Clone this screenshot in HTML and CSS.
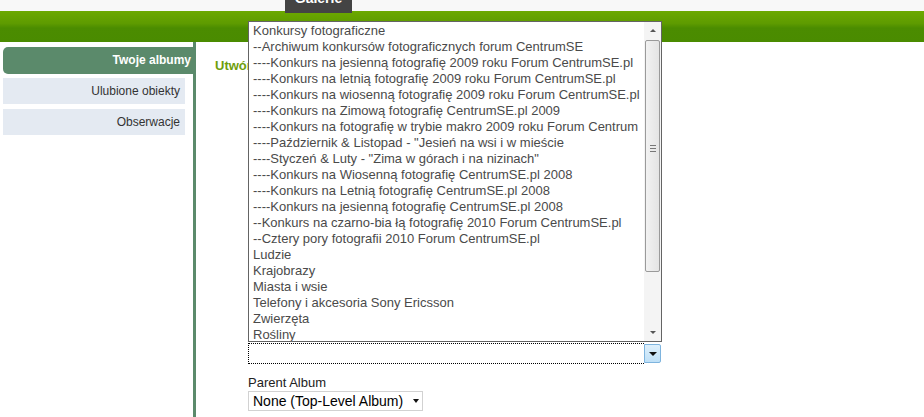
FILE: index.html
```html
<!DOCTYPE html>
<html lang="pl">
<head>
<meta charset="utf-8">
<title>Galerie</title>
<link rel="stylesheet" href="styles.css">
</head>
<body>
<div class="topstrip">
  <div class="tab"><span>Galerie</span></div>
</div>
<div class="greenbar"></div>
<div class="page">
  <div class="sidebar">
    <div class="side-active">Twoje albumy</div>
    <div class="side-item">Ulubione obiekty</div>
    <div class="side-item">Obserwacje</div>
  </div>
  <div class="main">
    <h2 class="heading">Utwórz nowy album</h2>
    <div class="form">
      <div class="combo">
        <div class="droplist">
          <div class="options">
            <div class="opt">Konkursy fotograficzne</div>
            <div class="opt">--Archiwum konkursów fotograficznych forum CentrumSE</div>
            <div class="opt">----Konkurs na jesienną fotografię 2009 roku Forum CentrumSE.pl</div>
            <div class="opt">----Konkurs na letnią fotografię 2009 roku Forum CentrumSE.pl</div>
            <div class="opt">----Konkurs na wiosenną fotografię 2009 roku Forum CentrumSE.pl</div>
            <div class="opt">----Konkurs na Zimową fotografię CentrumSE.pl 2009</div>
            <div class="opt">----Konkurs na fotografię w trybie makro 2009 roku Forum Centrum</div>
            <div class="opt">----Październik &amp; Listopad - "Jesień na wsi i w mieście</div>
            <div class="opt">----Styczeń &amp; Luty - "Zima w górach i na nizinach"</div>
            <div class="opt">----Konkurs na Wiosenną fotografię CentrumSE.pl 2008</div>
            <div class="opt">----Konkurs na Letnią fotografię CentrumSE.pl 2008</div>
            <div class="opt">----Konkurs na jesienną fotografię CentrumSE.pl 2008</div>
            <div class="opt">--Konkurs na czarno-bia łą fotografię 2010 Forum CentrumSE.pl</div>
            <div class="opt">--Cztery pory fotografii 2010 Forum CentrumSE.pl</div>
            <div class="opt">Ludzie</div>
            <div class="opt">Krajobrazy</div>
            <div class="opt">Miasta i wsie</div>
            <div class="opt">Telefony i akcesoria Sony Ericsson</div>
            <div class="opt">Zwierzęta</div>
            <div class="opt">Rośliny</div>
          </div>
          <div class="scrollbar">
            <div class="sb-btn"><span class="tri-up"></span></div>
            <div class="sb-track">
              <div class="sb-thumb"><span class="grip"></span></div>
            </div>
            <div class="sb-btn"><span class="tri-down"></span></div>
          </div>
        </div>
        <div class="combo-field"></div>
        <div class="combo-btn"><span class="tri-down dark"></span></div>
      </div>
      <div class="label">Parent Album</div>
      <div class="select2">None (Top-Level Album) <span class="tri-down dark small"></span></div>
    </div>
  </div>
</div>
</body>
</html>
```

FILE: styles.css
```css
html, body {
  margin: 0;
  padding: 0;
  background: #ffffff;
  font-family: Arial, "Liberation Sans", sans-serif;
}

.topstrip {
  height: 11px;
  background: #f8f8f8;
  position: relative;
}

.tab {
  position: absolute;
  left: 285px;
  top: 0;
  width: 67px;
  height: 13px;
  background: #444444;
  overflow: hidden;
  z-index: 2;
  text-align: center;
}

.tab span {
  display: block;
  margin-top: -10px;
  color: #ffffff;
  font-size: 14px;
  font-weight: bold;
  line-height: 16px;
}

.greenbar {
  height: 31px;
  background: linear-gradient(to bottom, #6ca900 0%, #5e9b00 40%, #4b8c00 55%, #4a8b00 100%);
}

.page {
  display: flex;
  align-items: stretch;
  min-height: 375px;
}

.sidebar {
  width: 190px;
  margin-left: 3px;
  padding-top: 5px;
  border-right: 3px solid #5b8a6b;
  box-sizing: content-box;
}

.side-active {
  height: 27px;
  line-height: 27px;
  background: #5b8a6b;
  color: #ffffff;
  font-weight: bold;
  font-size: 12px;
  text-align: right;
  padding-right: 5px;
  border-radius: 5px 0 0 5px;
  margin-right: -3px;
}

.side-item {
  width: 182px;
  height: 26px;
  line-height: 26px;
  margin-top: 4px;
  background: #e4eaf2;
  color: #333333;
  font-size: 12px;
  text-align: right;
  box-sizing: border-box;
  padding-right: 5px;
}

.side-item + .side-item {
  margin-top: 5px;
}

.main {
  flex: 1;
  padding-left: 19px;
}

.heading {
  margin: 17px 0 0 0;
  font-size: 13px;
  font-weight: bold;
  color: #6f9e0c;
  line-height: 14px;
}

.form {
  margin-left: 33px;
  margin-top: 270px;
}

.combo {
  position: relative;
  width: 413px;
  height: 21px;
  display: flex;
}

.combo-field {
  flex: 1;
  border: 1px dotted #000000;
  border-right: none;
  background: #ffffff;
}

.combo-btn {
  width: 17px;
  height: 19px;
  margin-top: 1px;
  background: linear-gradient(to bottom, #def0fc, #bfe0f7);
  border: 1px solid #7eb4de;
  border-radius: 0 2px 2px 0;
  display: flex;
  align-items: center;
  justify-content: center;
  box-sizing: border-box;
}

.droplist {
  position: absolute;
  left: 0;
  bottom: 100%;
  margin-bottom: 1px;
  width: 414px;
  height: 321px;
  border: 1px solid #646464;
  background: #ffffff;
  box-sizing: border-box;
  display: flex;
  z-index: 5;
}

.options {
  flex: 1;
  padding-top: 1px;
  padding-left: 4px;
  overflow: hidden;
}

.opt {
  height: 16px;
  line-height: 16px;
  font-size: 13px;
  color: #4a4a4a;
  white-space: nowrap;
}

.scrollbar {
  width: 17px;
  display: flex;
  flex-direction: column;
  background: #f4f4f4;
}

.sb-btn {
  height: 17px;
  display: flex;
  align-items: center;
  justify-content: center;
}

.sb-track {
  flex: 1;
  padding: 1px 1px;
}

.sb-thumb {
  height: 230px;
  border: 1px solid #9a9a9a;
  border-radius: 2px;
  background: linear-gradient(to right, #f2f2f2, #e4e4e4);
  display: flex;
  align-items: center;
  justify-content: center;
}

.grip {
  width: 6px;
  height: 5px;
  border-top: 1px solid #777;
  border-bottom: 1px solid #777;
  position: relative;
  margin-top: -15px;
}

.grip::after {
  content: "";
  position: absolute;
  left: 0;
  right: 0;
  top: 2px;
  border-top: 1px solid #777;
}

.tri-up {
  width: 0;
  height: 0;
  border-left: 3px solid transparent;
  border-right: 3px solid transparent;
  border-bottom: 3px solid #555;
}

.tri-down {
  width: 0;
  height: 0;
  border-left: 3px solid transparent;
  border-right: 3px solid transparent;
  border-top: 3px solid #555;
}

.tri-down.dark {
  border-left-width: 4px;
  border-right-width: 4px;
  border-top: 4px solid #111;
}

.tri-down.small {
  display: inline-block;
  border-left-width: 3px;
  border-right-width: 3px;
  border-top: 4px solid #111;
  vertical-align: middle;
  margin-left: 6px;
  margin-bottom: 2px;
}

.label {
  margin-top: 12px;
  font-size: 13px;
  color: #222222;
  line-height: 14px;
}

.select2 {
  display: inline-block;
  margin-top: 1px;
  width: 175px;
  height: 20px;
  line-height: 18px;
  border: 1px solid #d2d2d2;
  box-sizing: border-box;
  font-size: 14px;
  color: #000000;
  padding-left: 4px;
  white-space: nowrap;
}
```
